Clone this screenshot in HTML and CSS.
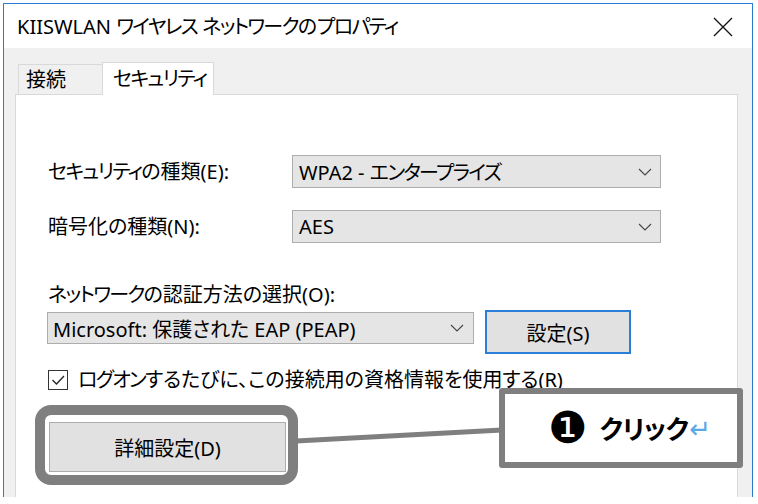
FILE: index.html
```html
<!DOCTYPE html>
<html lang="ja">
<head>
<meta charset="utf-8">
<title>KIISWLAN ワイヤレス ネットワークのプロパティ</title>
<link rel="stylesheet" href="styles.css">
</head>
<body>
<div class="window">
  <div class="titlebar">
    <span class="title">KIISWLAN <span class="k">ワイヤレス</span> <span class="k">ネットワーク</span>の<span class="k">プロパティ</span></span>
    <svg class="close" width="20" height="20" viewBox="0 0 20 20"><path d="M1 1 L19 19 M19 1 L1 19" stroke="#111" stroke-width="1.3" fill="none"/></svg>
  </div>
  <div class="client">
    <div class="tabs">
      <div class="tab">接続</div>
      <div class="tab tab-active"><span class="k">セキュリティ</span></div>
    </div>
    <div class="panel">
      <div class="grid">
        <div class="label"><span class="k">セキュリティ</span>の種類(E):</div>
        <div class="combo"><span>WPA2 - <span class="k">エンタープライズ</span></span><svg class="chev" width="14" height="8" viewBox="0 0 14 8"><path d="M1 1 L7 7 L13 1" stroke="#444" stroke-width="1.1" fill="none"/></svg></div>
        <div class="label">暗号化の種類(N):</div>
        <div class="combo"><span>AES</span><svg class="chev" width="14" height="8" viewBox="0 0 14 8"><path d="M1 1 L7 7 L13 1" stroke="#444" stroke-width="1.1" fill="none"/></svg></div>
      </div>
      <div class="label auth-label"><span class="k">ネットワーク</span>の認証方法の選択(O):</div>
      <div class="auth-row">
        <div class="combo combo-auth"><span>Microsoft: 保護された EAP (PEAP)</span><svg class="chev" width="14" height="8" viewBox="0 0 14 8"><path d="M1 1 L7 7 L13 1" stroke="#444" stroke-width="1.1" fill="none"/></svg></div>
        <div class="btn btn-focus">設定(S)</div>
      </div>
      <div class="check-row">
        <span class="checkbox"><svg width="18" height="18" viewBox="0 0 18 18"><path d="M3.5 9 L7.5 13 L15 5" stroke="#222" stroke-width="1.3" fill="none"/></svg></span>
        <span class="label"><span class="k">ログオン</span>するたびに、この接続用の資格情報を使用する(R)</span>
      </div>
      <div class="highlight">
        <div class="btn btn-detail">詳細設定(D)</div>
      </div>
    </div>
  </div>
</div>
<svg class="connector" width="758" height="504" viewBox="0 0 758 504"><line x1="296" y1="441" x2="502" y2="430" stroke="#7f7f7f" stroke-width="5"/></svg>
<div class="callout">
  <span class="num">❶</span>
  <span class="click">クリック</span><span class="ret">↵</span>
</div>
</body>
</html>
```

FILE: styles.css
```css
html, body {
  margin: 0;
  padding: 0;
}
body {
  width: 758px;
  height: 504px;
  overflow: hidden;
  background: #ffffff;
  position: relative;
  font-family: "Noto Sans", "Noto Sans CJK JP", sans-serif;
  font-size: 20px;
  color: #000;
  font-feature-settings: "palt";
}
.k {
  letter-spacing: -1.7px;
}
.window {
  box-sizing: border-box;
  margin: 3px 0 0 3px;
  width: 750px;
  height: 494px;
  border: 1px solid #2a7bd4;
  border-bottom: none;
  display: flex;
  flex-direction: column;
  overflow: hidden;
}
.titlebar {
  height: 44px;
  flex: none;
  background: #fff;
  display: flex;
  align-items: center;
  justify-content: space-between;
  padding: 0 19px 0 13px;
}
.title {
  line-height: 26px;
  padding-top: 1px;
  white-space: nowrap;
}
.close {
  display: block;
  margin-top: 1px;
}
.client {
  flex: 1;
  background: #f0f0f0;
  padding: 14px 14px 0 11px;
  display: flex;
  flex-direction: column;
}
.tabs {
  height: 32px;
  display: flex;
  align-items: flex-end;
  padding-left: 3px;
}
.tab {
  box-sizing: border-box;
  height: 30px;
  width: 85px;
  border: 1px solid #d9d9d9;
  border-bottom: none;
  background: #f0f0f0;
  padding-left: 7px;
  line-height: 29px;
  white-space: nowrap;
}
.tab-active {
  position: relative;
  z-index: 1;
  height: 33px;
  width: 112px;
  margin-left: -1px;
  margin-bottom: -1px;
  background: #fff;
  padding-left: 10px;
  line-height: 31px;
}
.panel {
  flex: 1;
  background: #fff;
  border: 1px solid #d9d9d9;
  border-bottom: none;
  padding: 60px 0 0 32px;
}
.label {
  line-height: 26px;
  white-space: nowrap;
}
.grid {
  display: grid;
  grid-template-columns: 244px 369px;
  row-gap: 22px;
  align-items: center;
}
.combo {
  box-sizing: border-box;
  height: 33px;
  background: #e5e5e5;
  border: 1px solid #adadad;
  display: flex;
  align-items: center;
  justify-content: space-between;
  padding: 0 8px 0 6px;
  white-space: nowrap;
}
.chev {
  display: block;
}
.auth-label {
  margin-top: 39px;
}
.auth-row {
  margin-top: 2px;
  display: flex;
  align-items: flex-start;
  gap: 11px;
}
.combo-auth {
  width: 427px;
  height: 32px;
  margin-top: 2px;
  margin-left: -1px;
  padding-left: 5px;
  padding-right: 9px;
}
.btn {
  box-sizing: border-box;
  background: #e1e1e1;
  border: 1px solid #adadad;
  display: flex;
  align-items: center;
  justify-content: center;
}
.btn-focus {
  width: 146px;
  height: 44px;
  border: 2px solid #2b7fd8;
}
.check-row {
  margin-top: 16px;
  display: flex;
  align-items: center;
  gap: 10px;
  height: 20px;
}
.checkbox {
  box-sizing: border-box;
  width: 20px;
  height: 20px;
  border: 1px solid #333;
  display: flex;
  align-items: center;
  justify-content: center;
  background: #fff;
}
.checkbox svg {
  display: block;
}
.highlight {
  width: max-content;
  margin: 15px 0 0 -13px;
  border: 10px solid #7f7f7f;
  border-radius: 16px;
  padding: 7px 2px 3px 4px;
  background: #fff;
}
.btn-detail {
  width: 237px;
  height: 50px;
}
.connector {
  position: absolute;
  left: 0;
  top: 0;
  pointer-events: none;
}
.callout {
  position: absolute;
  left: 499px;
  top: 388px;
  box-sizing: border-box;
  width: 244px;
  height: 80px;
  border: 6px solid #7f7f7f;
  border-radius: 3px;
  background: #fff;
  display: flex;
  align-items: center;
  padding-left: 45px;
}
.num {
  font-family: "DejaVu Sans", sans-serif;
  font-size: 44px;
  line-height: 1;
  margin-right: 12px;
  margin-left: -2px;
}
.click {
  font-family: "Noto Sans CJK JP", sans-serif;
  font-weight: bold;
  font-size: 26px;
  line-height: 1;
  letter-spacing: -0.5px;
}
.ret {
  font-family: "DejaVu Sans", sans-serif;
  font-size: 26px;
  line-height: 1;
  color: #5aa8e8;
  margin-left: 1px;
  margin-top: 2px;
}
```
